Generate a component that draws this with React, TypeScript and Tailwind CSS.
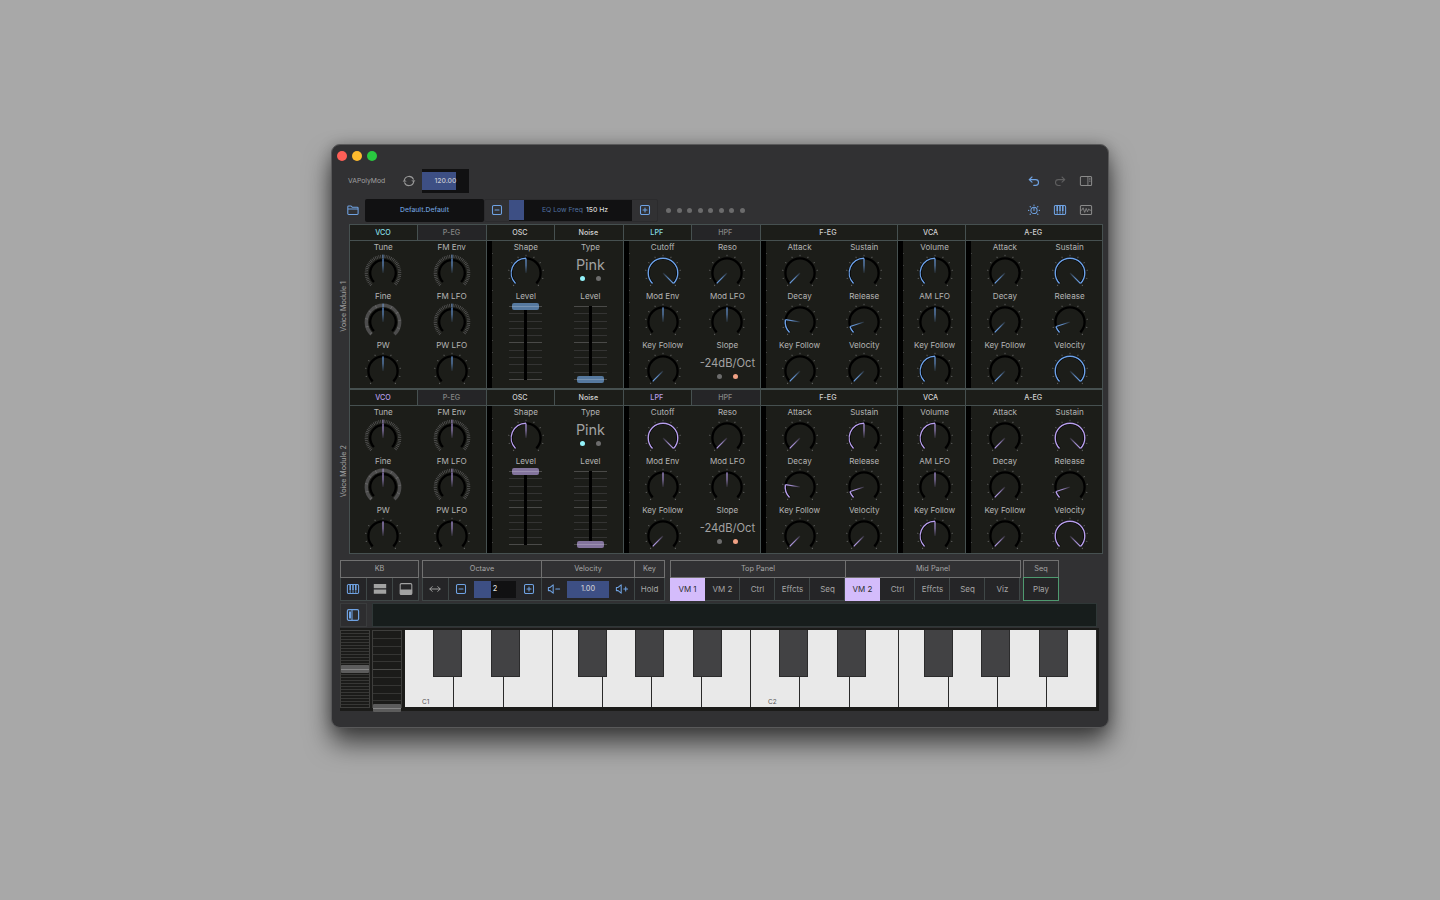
import type { ReactNode } from "react"

type Ring = 'ticks' | 'dashed' | 'solid'

interface KnobProps {
  label: string
  value: number
  color: string
  bipolar?: boolean
  ring?: Ring
}

const polar = (r: number, deg: number) => {
  const a = (deg * Math.PI) / 180
  return [r * Math.sin(a), -r * Math.cos(a)]
}

const arc = (r: number, from: number, to: number) => {
  const [x1, y1] = polar(r, from)
  const [x2, y2] = polar(r, to)
  return `M${x1} ${y1} A${r} ${r} 0 ${to - from > 180 ? 1 : 0} 1 ${x2} ${y2}`
}

const tickAngles = Array.from({ length: 11 }, (_, i) => -135 + i * 27)

const Label = ({ children }: { children: ReactNode }) => (
  <div className="h-3 text-[8.1px] leading-[13px] text-[#b4b4b4] whitespace-nowrap">{children}</div>
)

const Knob = ({ label, value, color, bipolar, ring = 'ticks' }: KnobProps) => {
  const angle = -135 + value * 270
  const radius = ring === 'ticks' ? 14.6 : 12.8
  const id = `needle-${color.slice(1)}`

  return (
    <div className="h-[49px] flex flex-col items-center">
      <Label>{label}</Label>
      <svg width="44" height="37" viewBox="-22 -20 44 37" fill="none" className="shrink-0 overflow-visible">
        <defs>
          <linearGradient id={id} gradientUnits="userSpaceOnUse" x1="0" y1="-15" x2="0" y2="0">
            <stop offset="0" stopColor={color} />
            <stop offset="0.5" stopColor={color} stopOpacity="0.8" />
            <stop offset="1" stopColor={color} stopOpacity="0.1" />
          </linearGradient>
        </defs>
        {ring === 'ticks' && tickAngles.map((t) => (
          <rect key={t} x="-0.4" y="-18.2" width="0.8" height="1.4" fill="#666" transform={`rotate(${t})`} />
        ))}
        {ring === 'dashed' && <path d={arc(16.7, -136, 136)} stroke="#565656" strokeWidth="3.2" strokeDasharray="0.75 1" />}
        {ring === 'solid' && (
          <>
            <path d={arc(16.7, -137, 137)} stroke="#4c4c4c" strokeWidth="3.4" />
            <path d={arc(16.7, -135, 135)} stroke="#6c6c6c" strokeWidth="3" strokeDasharray="0.7 7.2" />
          </>
        )}
        <path d={arc(radius, -135, 135)} stroke="#000" strokeWidth="2.3" />
        {!bipolar && value > 0 && <path d={arc(14.8, -135, angle)} stroke={color} strokeWidth="1.4" />}
        {ring !== 'ticks' && <rect x="-0.5" y="-18.4" width="1" height="3.4" fill={color} opacity="0.8" />}
        <rect
          x="-0.6" y="-14.6" width="1.2" height="14.6"
          fill={`url(#${id})`}
          transform={`rotate(${angle})`}
        />
      </svg>
    </div>
  )
}

const Fader = ({ value, thumb }: { value: number, thumb: string }) => (
  <div className="h-[98px] flex flex-col items-center">
    <Label>Level</Label>
    <div className="relative w-[33px] h-[74px] mt-[4px] flex flex-col justify-between">
      {tickAngles.map((t, i) => (
        <div key={t} className={`h-px w-full ${i % 5 === 0 ? 'bg-[#4a4a48]' : 'bg-[#343433]'}`} />
      ))}
      <div className="absolute left-[15px] top-0 w-[3px] h-full bg-black" />
      <div
        className={`absolute left-[3px] w-[27px] h-[7px] rounded-[2px] flex items-center ${thumb}`}
        style={{ top: `${(1 - value) * 73 - 3}px` }}
      >
        <div className="w-full h-px bg-white/20" />
      </div>
    </div>
  </div>
)

const Choice = ({ label, text, textClass, dots }: { label: string, text: string, textClass: string, dots: string[] }) => (
  <div className="h-[49px] flex flex-col items-center">
    <Label>{label}</Label>
    <div className={`h-[23px] leading-[24px] text-[#a2a2a2] whitespace-nowrap ${textClass}`}>{text}</div>
    <div className="flex gap-[11px]">
      {dots.map((d) => <div key={d} className={`size-[5px] rounded-full ${d}`} />)}
    </div>
  </div>
)

const Tab = ({ children, className }: { children: ReactNode, className: string }) => (
  <div className={`border-l border-[#465050] flex items-center justify-center pt-[1.5px] pr-[1.5px] text-[7.2px] font-medium ${className}`}>
    {children}
  </div>
)

// one column group of the voice panel, with the level meter strip on its left
const Section = ({ span, children, meter = true }: { span: string, children: ReactNode, meter?: boolean }) => (
  <div className={`border-l border-[#465050] flex ${span}`}>
    {meter && (
      <div className="w-[6px] shrink-0 bg-linear-to-r from-black from-[5px] to-[#1c1d19] to-[5px] flex flex-col items-end gap-[11.37px] pt-[12px]">
        {tickAngles.map((t) => <div key={t} className="w-px h-px bg-[#444] shrink-0" />)}
      </div>
    )}
    <div className={`flex-1 flex *:flex-1 *:w-0 ${meter ? 'pl-[0.5px]' : '-ml-px'}`}>{children}</div>
  </div>
)

const VoiceModule = ({ name, color, active, thumb }: { name: string, color: string, active: string, thumb: string }) => (
  <div className="flex h-[165px]">
    <div className="w-[11px] pl-px flex items-center justify-center">
      <span className="-rotate-90 whitespace-nowrap text-[7.1px] text-[#a0a0a0]">{name}</span>
    </div>
    <div className="w-[754px] border-r border-b border-[#465050] bg-[#1c1d19]">
      <div className="h-[17px] grid grid-cols-11 border-y border-[#465050] text-[#d0d0d0]">
        <Tab className={active}>VCO</Tab>
        <Tab className="bg-[#252527] text-[#858585]">P-EG</Tab>
        <Tab className="">OSC</Tab>
        <Tab className="">Noise</Tab>
        <Tab className={active}>LPF</Tab>
        <Tab className="bg-[#252527] text-[#858585]">HPF</Tab>
        <Tab className="col-span-2">F-EG</Tab>
        <Tab className="">VCA</Tab>
        <Tab className="col-span-2">A-EG</Tab>
      </div>
      <div className="h-[147px] grid grid-cols-11">
        <Section span="col-span-2" meter={false}>
          <div>
            <Knob label="Tune" value={0.5} color={color} bipolar ring="dashed" />
            <Knob label="Fine" value={0.5} color={color} bipolar ring="solid" />
            <Knob label="PW" value={0.5} color={color} bipolar />
          </div>
          <div>
            <Knob label="FM Env" value={0.5} color={color} bipolar ring="dashed" />
            <Knob label="FM LFO" value={0.5} color={color} bipolar ring="dashed" />
            <Knob label="PW LFO" value={0.5} color={color} bipolar />
          </div>
        </Section>
        <Section span="col-span-2">
          <div>
            <Knob label="Shape" value={0.5} color={color} />
            <Fader value={1} thumb={thumb} />
          </div>
          <div>
            <Choice label="Type" text="Pink" textClass="text-[14.4px]" dots={['bg-[#93f3fa]', 'bg-[#6c6c6c]']} />
            <Fader value={0} thumb={thumb} />
          </div>
        </Section>
        <Section span="col-span-2">
          <div>
            <Knob label="Cutoff" value={1} color={color} />
            <Knob label="Mod Env" value={0.5} color={color} bipolar />
            <Knob label="Key Follow" value={0} color={color} />
          </div>
          <div>
            <Knob label="Reso" value={0} color={color} />
            <Knob label="Mod LFO" value={0.5} color={color} bipolar />
            <Choice label="Slope" text="-24dB/Oct" textClass="text-[11.2px]" dots={['bg-[#6c6c6c]', 'bg-[#f0a184]']} />
          </div>
        </Section>
        <Section span="col-span-2">
          <div>
            <Knob label="Attack" value={0} color={color} />
            <Knob label="Decay" value={0.2} color={color} />
            <Knob label="Key Follow" value={0} color={color} />
          </div>
          <div>
            <Knob label="Sustain" value={0.5} color={color} />
            <Knob label="Release" value={0.1} color={color} />
            <Knob label="Velocity" value={0} color={color} />
          </div>
        </Section>
        <Section span="col-span-1">
          <div>
            <Knob label="Volume" value={0.5} color={color} />
            <Knob label="AM LFO" value={0.5} color={color} bipolar />
            <Knob label="Key Follow" value={0.5} color={color} />
          </div>
        </Section>
        <Section span="col-span-2">
          <div>
            <Knob label="Attack" value={0} color={color} />
            <Knob label="Decay" value={0} color={color} />
            <Knob label="Key Follow" value={0} color={color} />
          </div>
          <div>
            <Knob label="Sustain" value={1} color={color} />
            <Knob label="Release" value={0.1} color={color} />
            <Knob label="Velocity" value={1} color={color} />
          </div>
        </Section>
      </div>
    </div>
  </div>
)

const Icon = ({ children, className = 'text-[#6fa2e2]' }: { children: ReactNode, className?: string }) => (
  <svg width="14" height="12" viewBox="0 0 14 12" fill="none" stroke="currentColor" strokeWidth="1.05" strokeLinecap="round" strokeLinejoin="round" className={`shrink-0 ${className}`}>
    {children}
  </svg>
)

const Minus = () => <Icon><rect x="2.5" y="1.5" width="9" height="9" rx="1.3" /><path d="M5 6h4" /></Icon>
const Plus = () => <Icon><rect x="2.5" y="1.5" width="9" height="9" rx="1.3" /><path d="M5 6h4M7 4v4" /></Icon>
const Piano = () => (
  <Icon>
    <rect x="1.4" y="1.5" width="11.2" height="9" rx="1.2" />
    <path d="M4.2 7v3.2M7 7v3.2M9.8 7v3.2" strokeWidth="0.8" />
    <path d="M4.2 2v5M7 2v5M9.8 2v5" strokeWidth="1.6" strokeLinecap="butt" />
  </Icon>
)

const Head = ({ children, className }: { children: ReactNode, className: string }) => (
  <div className={`h-[18px] border border-[#717171] flex items-center justify-center text-[7.3px] leading-[12px] text-[#a6a6a6] ${className}`}>{children}</div>
)

const Btn = ({ children, className, on }: { children: ReactNode, className: string, on?: boolean }) => (
  <div className={`h-[23px] border-r border-b flex items-center justify-center text-[8px] ${on ? 'bg-[#d4bcfb] border-[#d4bcfb] text-[#2c2c30]' : 'bg-[#252527] border-[#3f4747] text-[#a6a6a6]'} ${className}`}>{children}</div>
)

const topPanel = ['VM 1', 'VM 2', 'Ctrl', 'Effcts', 'Seq']
const midPanel = ['VM 2', 'Ctrl', 'Effcts', 'Seq', 'Viz']

const PanelPicker = ({ title, items }: { title: string, items: string[] }) => (
  <div className="w-[175px]">
    <Head className="w-[176px]">{title}</Head>
    <div className="flex">
      {items.map((item, i) => (
        <Btn key={item} on={i === 0} className="w-[35px] pl-px">{item}</Btn>
      ))}
    </div>
  </div>
)

const Toolbar = () => (
  <div className="flex ml-[8px] mt-[6px]">
    <div className="w-[79px] mr-[3px]">
      <Head className="">KB</Head>
      <div className="flex">
        <Btn className="w-[27px] border-l pr-px"><Piano /></Btn>
        <Btn className="w-[26px]">
          <Icon className="text-[#a2a2a2]"><path d="M0.8 1.1h12.4v4.2H0.8zM0.8 6.5h12.4v4.2H0.8z" fill="currentColor" stroke="none" /></Icon>
        </Btn>
        <Btn className="w-[26px]">
          <Icon className="text-[#a2a2a2]"><rect x="1.2" y="0.6" width="11.6" height="10.8" rx="1.2" /><path d="M1.4 7h11.2v4H1.4z" fill="currentColor" /></Icon>
        </Btn>
      </div>
    </div>
    <div className="w-[120px]">
      <Head className="w-[120px]">Octave</Head>
      <div className="flex">
        <Btn className="w-[27px] border-l pr-px">
          <Icon className="text-[#a2a2a2]"><path d="M2 6h10M4.2 3.6L1.8 6l2.4 2.4M9.8 3.6L12.2 6 9.8 8.4" strokeWidth="0.95" /></Icon>
        </Btn>
        <Btn className="w-[93px] gap-[6px]">
          <Minus />
          <div className="w-[42px] h-[17px] flex items-center justify-center pt-px font-medium text-[#dadada] text-[7.3px] bg-linear-to-r from-[#3d4f84] from-[17px] to-[#111112] to-[17px]">2</div>
          <Plus />
        </Btn>
      </div>
    </div>
    <div className="w-[93px]">
      <Head className="w-[93px] border-l-0">Velocity</Head>
      <Btn className="w-[93px] gap-[6px]">
        <Icon><path d="M1.4 4.4h1.7L6.2 1.8v8.4L3.1 7.6H1.4z" /><path d="M8.8 6h3.8" /></Icon>
        <div className="w-[42px] h-[17px] bg-[#3d4f84] flex items-center justify-center pt-[1.5px] font-medium text-[#c9c9cf] text-[7.2px]">1.00</div>
        <Icon><path d="M1.4 4.4h1.7L6.2 1.8v8.4L3.1 7.6H1.4z" /><path d="M8.8 6h3.8M10.7 4.1v3.8" /></Icon>
      </Btn>
    </div>
    <div className="w-[30px] mr-[5px]">
      <Head className="border-l-0">Key</Head>
      <Btn className="">Hold</Btn>
    </div>
    <PanelPicker title="Top Panel" items={topPanel} />
    <PanelPicker title="Mid Panel" items={midPanel} />
    <div className="w-[36px] ml-[3px]">
      <Head className="pb-px">Seq</Head>
      <div className="h-[24px] -mt-px border border-[#4f9a70] bg-[#252527] flex items-center justify-center text-[8px] text-[#a6a6a6]">Play</div>
    </div>
  </div>
)

const semitone = 692 / 24
const blackKeys = [1, 3, 6, 8, 10, 13, 15, 18, 20, 22]

const Keyboard = () => (
  <div className="ml-[8px] mt-px w-[759px] h-[83px] bg-[#1b1b19] pt-[2px] flex">
    <div className="relative w-[30px] h-[78px] border border-[#3e3e3c] py-[2px] flex flex-col justify-between">
      {Array.from({ length: 25 }, (_, i) => <div key={i} className="h-px bg-[#373735]" />)}
      <div className="absolute left-0 top-[34px] w-[28px] h-[8px] rounded-[1px] bg-[#5c5c5c] flex items-center"><div className="w-full h-px bg-[#858585]" /></div>
    </div>
    <div className="relative ml-[2px] w-[30px] h-[78px] border border-[#3e3e3c] pt-[7px] flex flex-col gap-[6.8px]">
      {Array.from({ length: 9 }, (_, i) => <div key={i} className={`h-px shrink-0 ${i === 4 ? 'bg-[#4a4a48]' : 'bg-[#353533]'}`} />)}
      <div className="absolute left-0 top-[73px] w-[28px] h-[8px] rounded-[1px] bg-[#5c5c5c] flex items-center"><div className="w-full h-px bg-[#858585]" /></div>
    </div>
    <div className="relative ml-[3px] w-[692px] h-[77px] flex">
      {Array.from({ length: 14 }, (_, i) => (
        <div key={i} className="flex-1 border-r border-[#2a2a2a] bg-[#e9e9e9] flex items-end pl-[17px] pb-px text-[6.5px] leading-[8px] text-[#555]">
          {i % 7 === 0 && `C${i / 7 + 1}`}
        </div>
      ))}
      {blackKeys.map((k) => (
        <div
          key={k}
          className="absolute top-0 w-[29px] h-[47px] bg-[#424244] border border-t-0 border-[#2b2b2c]"
          style={{ left: `${k * semitone - 0.5}px` }}
        />
      ))}
    </div>
  </div>
)

const App = () => {
  return (
    <div className="w-[1440px] h-[900px] overflow-hidden bg-[#a8a8a8] pl-[331px] pt-[144px] font-['Inter','Liberation_Sans',sans-serif]">
      <div className="w-[778px] h-[584px] rounded-[9px] border border-[#59595a] bg-[#313133] shadow-[0_15px_26px_rgba(0,0,0,0.62),0_0_14px_rgba(0,0,0,0.22)]">
        <div className="h-[22px] flex items-center gap-[5px] pl-[5.4px]">
          <div className="size-[10px] rounded-full bg-[#fe5f57]" />
          <div className="size-[10px] rounded-full bg-[#febb2e]" />
          <div className="size-[10px] rounded-full bg-[#29c840]" />
        </div>

        <div className="h-[28px] flex items-center">
          <span className="ml-[16px] w-[54px] pt-px text-[6.8px] text-[#a0a0a0]">VAPolyMod</span>
          <Icon className="text-[#989898]">
            <path d="M2.3 5.2A4.8 4.8 0 0 1 11.4 4.3M11.7 6.8A4.8 4.8 0 0 1 2.6 7.7" />
            <path d="M10 5.6h3L11.6 7.2zM4 6.4H1L2.4 4.8z" fill="currentColor" strokeWidth="0.3" />
          </Icon>
          <div className="ml-[6px] w-[47px] h-[24px] bg-[#111112] flex items-center">
            <div className="w-[34px] h-[18px] bg-[#3d4f84] flex items-center pl-[12.5px] text-[6.8px] font-medium text-[#c5c7d0]">120.00</div>
          </div>
          <div className="ml-auto mr-[15px] flex gap-[12px]">
            <Icon><path d="M5 2L2.2 4.6 5 7.2M2.4 4.6h6.2a2.9 2.9 0 0 1 0 5.8H6.8" strokeWidth="1.15" /></Icon>
            <Icon className="text-[#5f5f60]"><path d="M9 2l2.8 2.6L9 7.2M11.6 4.6H5.4a2.9 2.9 0 0 0 0 5.8h1.8" /></Icon>
            <Icon className="text-[#8a8a8a]"><rect x="1.4" y="1.5" width="11.2" height="9" rx="1" /><path d="M8.9 1.5v9M10.6 3.3h.5M10.6 4.8h.5M10.6 6.3h.5" strokeWidth="0.9" /></Icon>
          </div>
        </div>

        <div className="h-[29px] flex items-center pt-px">
          <div className="w-[33px] flex justify-end pr-[5px]">
            <Icon><path d="M1.8 9.6V2.8a.8.8 0 0 1 .8-.8h2.5l1.1 1.2h5a.9.9 0 0 1 .9.9v5.5a.9.9 0 0 1-.9.9H2.6a.8.8 0 0 1-.8-.9zM1.8 5h10.3" /></Icon>
          </div>
          <div className="w-[119px] h-[23px] rounded-[2px] bg-[#111112] flex items-center justify-center text-[6.8px] font-medium text-[#6c9cd8]">Default.Default</div>
          <div className="w-[174px] h-[23px] rounded-[2px] border border-[#2b2b2d] flex items-center">
            <div className="w-[24px] flex justify-center"><Minus /></div>
            <div className="w-[123px] h-[21px] flex items-center bg-[#111112]">
              <div className="w-[15px] h-[20px] bg-[#3d4f84]" />
              <span className="ml-[18px] w-[40px] text-[6.8px] text-[#5070a0] whitespace-nowrap">EQ Low Freq</span>
              <span className="ml-[4px] text-[6.8px] font-medium text-[#d5d5d5]">150 Hz</span>
            </div>
            <div className="w-[25px] flex justify-center"><Plus /></div>
          </div>
          <div className="ml-[8px] flex gap-[5.5px]">
            {Array.from({ length: 8 }, (_, i) => <div key={i} className="size-[5px] rounded-full bg-[#6b6b6c]" />)}
          </div>
          <div className="ml-auto mr-[15px] flex gap-[12px]">
            <Icon>
              <circle cx="7" cy="6.4" r="3.1" />
              <path d="M7 6.4V3.6" />
              <path d="M7 1.1v.1M3.2 2.6l.1.1M10.7 2.7l.1-.1M1.6 6.4h.1M12.3 6.4h.1M3.2 10.2l.1-.1M10.7 10.1l.1.1" strokeWidth="1.3" />
            </Icon>
            <Piano />
            <Icon className="text-[#8a8a8a]"><rect x="1.4" y="1.5" width="11.2" height="9" rx="1" /><path d="M1.6 6.2h1.2l1.3-2.4 1.6 4.6 1.5-4 1.3 3.4 1.2-3 .9 1.4h1.6" strokeWidth="0.85" /></Icon>
          </div>
        </div>

        <div className="pl-[6px]">
          <VoiceModule name="Voice Module 1" color="#6ea3ea" active="text-[#86dfe3]" thumb="bg-[#56799f]" />
          <VoiceModule name="Voice Module 2" color="#b9a0ee" active="text-[#b79fe8]" thumb="bg-[#83749d]" />
        </div>

        <Toolbar />

        <div className="flex ml-[8px] mt-[2px] h-[24px]">
          <div className="w-[27px] border border-[#3a3c3d] bg-[#2d2d2f] flex items-center justify-center pr-px">
            <Icon><rect x="1.4" y="0.7" width="11.2" height="10.6" rx="1.2" strokeWidth="1.2" /><path d="M3 2.6h2v6.8H3z" fill="currentColor" stroke="none" /><path d="M6 1v10" /></Icon>
          </div>
          <div className="ml-[5px] w-[725px] border border-[#2f3737] bg-[#171d1c]" />
        </div>

        <Keyboard />
      </div>
    </div>
  )
}

export default App
